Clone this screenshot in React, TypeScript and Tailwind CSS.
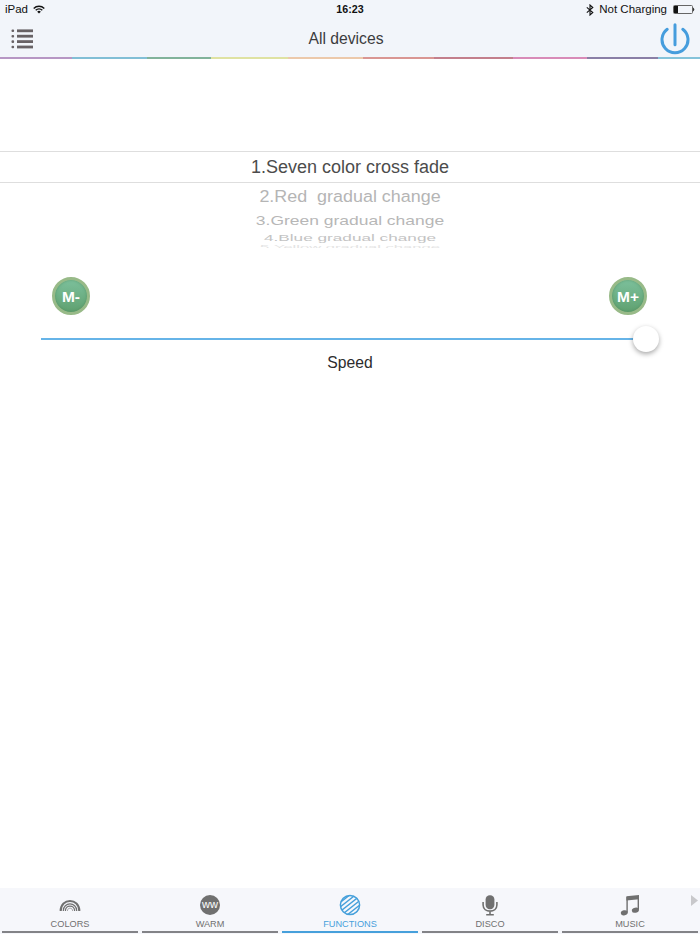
import type { ReactNode } from 'react';

const stripes = [
  { w: 72, c: '#b797c4' },
  { w: 75, c: '#82bfd6' },
  { w: 64, c: '#82b39b' },
  { w: 77, c: '#dfe2a2' },
  { w: 75, c: '#ecc9ab' },
  { w: 71, c: '#d99693' },
  { w: 79, c: '#c37f8c' },
  { w: 74, c: '#d88bb8' },
  { w: 71, c: '#8a7fa6' },
  { w: 42, c: '#85c3da' },
];

const StatusBar = () => (
  <div className="flex h-5 items-center text-[#111]">
    <div className="flex flex-1 items-center gap-[5px] pb-px pl-[5px] text-[11.5px]">
      <span>iPad</span>
      <svg width="12" height="9" viewBox="0 0 12 9" fill="none" stroke="#111" strokeWidth="1.4">
        <path d="M.7 3.4a7.6 7.6 0 0 1 10.6 0M2.7 5.3a4.8 4.8 0 0 1 6.6 0" />
        <path d="M4.2 6.7a2.6 2.6 0 0 1 3.6 0L6 8.6z" fill="#111" stroke="none" />
      </svg>
    </div>
    <span className="pb-px text-[10.7px] font-bold">16:23</span>
    <div className="flex flex-1 items-center justify-end pr-[5px] pb-px text-[11.5px]">
      <svg className="mr-[5px]" width="8" height="12" viewBox="0 0 8 12" fill="none" stroke="#111" strokeWidth="1.1">
        <path d="M.8 3.3l6 5.2L4 11V1l2.8 2.5-6 5.2" />
      </svg>
      <span className="whitespace-nowrap">Not Charging</span>
      <svg className="ml-[6px]" width="22" height="9" viewBox="0 0 22 9">
        <rect x=".5" y=".5" width="19" height="8" rx="1" fill="none" stroke="#666" />
        <rect x="1" y="1" width="4" height="7" fill="#111" />
        <path d="M20 2.5q2.6 2 0 4z" fill="#333" />
      </svg>
    </div>
  </div>
);

const Header = () => (
  <header className="bg-[#f2f5fa]">
    <StatusBar />
    <div className="flex h-[37px] items-center pl-[11px] pr-[10px]">
      <svg width="30" height="20" viewBox="0 0 30 20" fill="#686265">
        {[0.5, 5.9, 11.3, 16.7].map((y) => (
          <g key={y}>
            <rect x=".5" y={y} width="2.6" height="2.6" rx="1" />
            <rect x="6" y={y - 0.1} width="16" height="2.8" />
          </g>
        ))}
      </svg>
      <h1 className="flex-1 pr-[9px] text-center text-[15.7px] leading-none text-[#3c3c3e]">All devices</h1>
      <svg width="30" height="32" viewBox="0 0 30 32" fill="none" stroke="#469ddd" strokeWidth="3" strokeLinecap="round">
        <path d="M7.2 6.3a13 13 0 1 0 15.6 0M15 1.8v20" />
      </svg>
    </div>
    <div className="flex h-[2px]">
      {stripes.map((s, i) => (
        <div key={i} style={{ width: s.w, backgroundColor: s.c }} />
      ))}
    </div>
  </header>
);

const Picker = () => (
  <div className="mt-[92px] flex h-[97px] flex-col overflow-hidden text-center text-[18px] whitespace-pre">
    <div className="h-[32px] shrink-0 border-y border-[#dedede] leading-[31px] text-[#4c4c4c]">1.Seven color cross fade</div>
    <div className="h-[26px] shrink-0 scale-x-[0.995] scale-y-[0.94] leading-[26px] text-[#b5b5b5]">2.Red  gradual change</div>
    <div className="h-[22px] shrink-0 scale-x-[0.97] scale-y-[0.76] leading-[24px] text-[#b7b7b7]">3.Green gradual change</div>
    <div className="h-[14px] shrink-0 scale-x-[0.955] scale-y-[0.46] leading-[16px] text-[#c3c3c3]">4.Blue gradual change</div>
    <div className="h-[4px] shrink-0 scale-x-[0.92] scale-y-[0.25] leading-[4px] text-[#e4e4e4]">5.Yellow gradual change</div>
  </div>
);

const RoundButton = ({ label }: { label: string }) => (
  <button className="flex h-[38px] w-[38px] items-center justify-center rounded-full border-[3px] border-[#98ba88] bg-linear-to-b from-[#7fc3a0] to-[#5d9e6c] bg-origin-border pt-px text-[15.5px] font-bold text-white shadow-[inset_0_0_3px_rgba(70,130,80,0.6)]">
    {label}
  </button>
);

const Tab = ({ label, active, children }: { label: string; active?: boolean; children: ReactNode }) => (
  <div className={active ? 'flex w-[140px] flex-col items-center text-[#46a0db]' : 'flex w-[140px] flex-col items-center text-[#707070]'}>
    <div className="mt-[6px] h-[22px]">{children}</div>
    <span className="mt-[3px] h-[12px] text-[9.2px] leading-[10px]">{label}</span>
    <div className={active ? 'h-[2px] w-[136px] bg-[#46a0db]' : 'h-[2px] w-[136px] bg-[#838387]'} />
  </div>
);

const TabBar = () => (
  <nav className="relative flex h-[46px] bg-[#f6f7fb]">
    <Tab label="COLORS">
      <svg width="22" height="22" viewBox="0 0 22 22" fill="none" stroke="currentColor">
        <path d="M1.7 17C1.5 3.6 20.5 3.6 20.3 17" strokeWidth="2.1" />
        <path d="M4.3 17c-.2-9.4 13.6-9.4 13.4 0" strokeWidth="1.2" />
        <path d="M6.4 17c0-6.6 9.2-6.6 9.2 0" strokeWidth="1.2" />
        <path d="M8.4 17c0-3.8 5.2-3.8 5.2 0" strokeWidth=".6" />
      </svg>
    </Tab>
    <Tab label="WARM">
      <div className="mt-px flex h-[20px] w-[20px] items-center justify-center rounded-full bg-[#707070] text-[11px] leading-none text-white">
        <span className="pb-px">ww</span>
      </div>
    </Tab>
    <Tab label="FUNCTIONS" active>
      <svg width="22" height="22" viewBox="0 0 22 22" fill="none" stroke="currentColor" strokeWidth="1.5">
        <clipPath id="disc">
          <circle cx="11" cy="11" r="10" />
        </clipPath>
        <circle cx="11" cy="11" r="9.6" />
        <path clipPath="url(#disc)" d="M0 9.5L12 0M0 14L18 -.3M0 18.5L22 1M0 23L22 5.5M3 25.1L22 10M9 24.8L22 14.5" strokeWidth="1.4" />
      </svg>
    </Tab>
    <Tab label="DISCO">
      <svg width="22" height="22" viewBox="0 0 22 22" fill="none" stroke="currentColor" strokeWidth="1.6">
        <rect x="6.6" y="1.2" width="8.8" height="14" rx="4.2" fill="currentColor" stroke="none" />
        <path d="M4.1 8v3c0 8.2 13.8 8.2 13.8 0V8M11 17.2v3.2M7.2 20.7h7.6" />
      </svg>
    </Tab>
    <Tab label="MUSIC">
      <svg width="22" height="22" viewBox="0 0 22 22" fill="currentColor">
        <path d="M7.4 2.2L20 .9v4.4L7.4 6.6z" />
        <path d="M8.1 3v15.4M19.3 2v13.8" fill="none" stroke="currentColor" strokeWidth="1.4" />
        <ellipse cx="5.3" cy="18.8" rx="3.5" ry="2.5" transform="rotate(-12 5.3 18.8)" />
        <ellipse cx="16.4" cy="16.2" rx="3.6" ry="2.5" transform="rotate(-12 16.4 16.2)" />
      </svg>
    </Tab>
    <svg className="absolute top-[7px] right-[2px]" width="7" height="11" viewBox="0 0 7 11" fill="#c8c8cb">
      <path d="M0 0l7 5.5L0 11z" />
    </svg>
  </nav>
);

export default function App() {
  return (
    <div className="flex h-[934px] w-[700px] flex-col bg-white font-['Liberation_Sans',Arial,sans-serif]">
      <Header />
      <Picker />
      <div className="mt-[29px] flex justify-between pr-[53px] pl-[52px]">
        <RoundButton label="M-" />
        <RoundButton label="M+" />
      </div>
      <div className="mt-[11px] flex h-[26px] items-center pl-[41px]">
        <div className="h-[2px] w-[593px] bg-[#66b4e8]" />
        <div className="-ml-px h-[26px] w-[26px] rounded-full bg-white shadow-[0_2px_5px_rgba(0,0,0,0.35)]" />
      </div>
      <div className="mt-[2px] text-center text-[15.7px] leading-[18px] text-[#2c2c2c]">Speed</div>
      <div className="flex-1" />
      <TabBar />
    </div>
  );
}
